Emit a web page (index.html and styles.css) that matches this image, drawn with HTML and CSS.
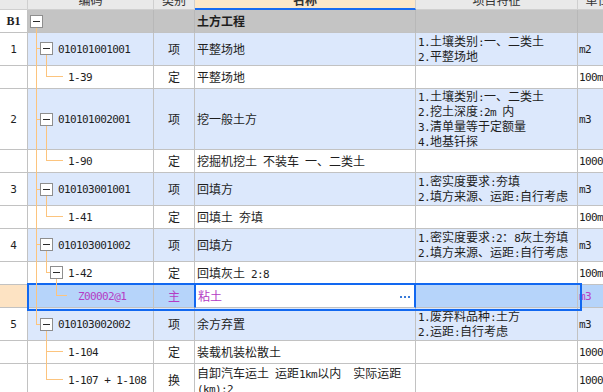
FILE: index.html
```html
<!DOCTYPE html>
<html lang="zh-CN">
<head>
<meta charset="utf-8">
<title>土方工程</title>
<link rel="stylesheet" href="styles.css">
</head>
<body>
<div class="sheet">
  <svg class="tree" width="100" height="400" viewBox="0 0 100 400" shape-rendering="crispEdges">
    <g stroke="#fcc47e" fill="none">
      <path d="M36.5 28V325M36 48.5H40M36 119.5H40M36 189.5H40M36 244.5H40M36 324.5H40"/>
      <path d="M46.5 55V77M46 76.5H63"/>
      <path d="M46.5 126V161M46 160.5H63"/>
      <path d="M46.5 196V217M46 216.5H63"/>
      <path d="M46.5 251V273M46 272.5H50"/>
      <path d="M56.5 279V296M56 295.5H67"/>
      <path d="M46.5 331V380M46 351.5H63M46 379.5H63"/>
    </g>
    <g fill="#fff" stroke="#8e8e8e">
      <rect x="30.5" y="15.5" width="12" height="12"/>
      <rect x="40.5" y="42.5" width="12" height="12"/>
      <rect x="40.5" y="113.5" width="12" height="12"/>
      <rect x="40.5" y="183.5" width="12" height="12"/>
      <rect x="40.5" y="238.5" width="12" height="12"/>
      <rect x="50.5" y="266.5" width="12" height="12"/>
      <rect x="40.5" y="318.5" width="12" height="12"/>
    </g>
    <g stroke="#2a2a2a">
      <path d="M33 21.5H40M43 48.5H50M43 119.5H50M43 189.5H50M43 244.5H50M53 272.5H60M43 324.5H50"/>
    </g>
  </svg>

  <div class="row head">
    <div class="c num"></div>
    <div class="c"><span>编码</span></div>
    <div class="c"><span>类别</span></div>
    <div class="c active"><span>名称</span></div>
    <div class="c"><span>项目特征</span></div>
    <div class="c"><span>单位</span></div>
  </div>

  <div class="row h23 group">
    <div class="c num"><span class="bnum">B1</span></div>
    <div class="c code"></div>
    <div class="c type"></div>
    <div class="c name"><span class="bold">土方工程</span></div>
    <div class="c feat"></div>
    <div class="c unit"></div>
  </div>

  <div class="row h33 item">
    <div class="c num"><span>1</span></div>
    <div class="c code l1"><span>010101001001</span></div>
    <div class="c type"><span>项</span></div>
    <div class="c name"><span>平整场地</span></div>
    <div class="c feat"><div><div><span class="a">1.</span>土壤类别<span class="a">:</span>一、二类土</div><div><span class="a">2.</span>平整场地</div></div></div>
    <div class="c unit"><span>m2</span></div>
  </div>

  <div class="row h23">
    <div class="c num"></div>
    <div class="c code l2"><span>1-39</span></div>
    <div class="c type"><span>定</span></div>
    <div class="c name"><span>平整场地</span></div>
    <div class="c feat"></div>
    <div class="c unit"><span>100m2</span></div>
  </div>

  <div class="row h61 item">
    <div class="c num"><span>2</span></div>
    <div class="c code l1"><span>010101002001</span></div>
    <div class="c type"><span>项</span></div>
    <div class="c name"><span>挖一般土方</span></div>
    <div class="c feat"><div><div><span class="a">1.</span>土壤类别<span class="a">:</span>一、二类土</div><div><span class="a">2.</span>挖土深度<span class="a">:2m </span>内</div><div><span class="a">3.</span>清单量等于定额量</div><div><span class="a">4.</span>地基钎探</div></div></div>
    <div class="c unit"><span>m3</span></div>
  </div>

  <div class="row h23">
    <div class="c num"></div>
    <div class="c code l2"><span>1-90</span></div>
    <div class="c type"><span>定</span></div>
    <div class="c name"><span>挖掘机挖土<span class="a"> </span>不装车<span class="a"> </span>一、二类土</span></div>
    <div class="c feat"></div>
    <div class="c unit"><span>1000m3</span></div>
  </div>

  <div class="row h33 item">
    <div class="c num"><span>3</span></div>
    <div class="c code l1"><span>010103001001</span></div>
    <div class="c type"><span>项</span></div>
    <div class="c name"><span>回填方</span></div>
    <div class="c feat"><div><div><span class="a">1.</span>密实度要求<span class="a">:</span>夯填</div><div><span class="a">2.</span>填方来源、运距<span class="a">:</span>自行考虑</div></div></div>
    <div class="c unit"><span>m3</span></div>
  </div>

  <div class="row h23">
    <div class="c num"></div>
    <div class="c code l2"><span>1-41</span></div>
    <div class="c type"><span>定</span></div>
    <div class="c name"><span>回填土<span class="a"> </span>夯填</span></div>
    <div class="c feat"></div>
    <div class="c unit"><span>100m3</span></div>
  </div>

  <div class="row h33 item">
    <div class="c num"><span>4</span></div>
    <div class="c code l1"><span>010103001002</span></div>
    <div class="c type"><span>项</span></div>
    <div class="c name"><span>回填方</span></div>
    <div class="c feat"><div><div><span class="a">1.</span>密实度要求<span class="a">:2</span>：<span class="a">8</span>灰土夯填</div><div><span class="a">2.</span>填方来源、运距<span class="a">:</span>自行考虑</div></div></div>
    <div class="c unit"><span>m3</span></div>
  </div>

  <div class="row h23">
    <div class="c num"></div>
    <div class="c code l2"><span>1-42</span></div>
    <div class="c type"><span>定</span></div>
    <div class="c name"><span>回填灰土<span class="a"> 2:8</span></span></div>
    <div class="c feat"></div>
    <div class="c unit"><span>100m3</span></div>
  </div>

  <div class="row h23 sel">
    <div class="c num"></div>
    <div class="c code l3"><span class="pur">Z00002@1</span></div>
    <div class="c type"><span class="pur">主</span></div>
    <div class="c name"><span class="pur">粘土</span><span class="more"></span></div>
    <div class="c feat"></div>
    <div class="c unit"><span class="pur">m3</span></div>
  </div>

  <div class="row h33 item">
    <div class="c num"><span>5</span></div>
    <div class="c code l1"><span>010103002002</span></div>
    <div class="c type"><span>项</span></div>
    <div class="c name"><span>余方弃置</span></div>
    <div class="c feat"><div><div><span class="a">1.</span>废弃料品种<span class="a">:</span>土方</div><div><span class="a">2.</span>运距<span class="a">:</span>自行考虑</div></div></div>
    <div class="c unit"><span>m3</span></div>
  </div>

  <div class="row h23">
    <div class="c num"></div>
    <div class="c code l2"><span>1-104</span></div>
    <div class="c type"><span>定</span></div>
    <div class="c name"><span>装载机装松散土</span></div>
    <div class="c feat"></div>
    <div class="c unit"><span>1000m3</span></div>
  </div>

  <div class="row h33">
    <div class="c num"></div>
    <div class="c code l2"><span>1-107 + 1-108</span></div>
    <div class="c type"><span>换</span></div>
    <div class="c name top"><div><div>自卸汽车运土<span class="a"> </span>运距<span class="a">1km</span>以内<span class="a">  </span>实际运距</div><div><span class="a">(km):2</span></div></div></div>
    <div class="c feat"></div>
    <div class="c unit"><span>1000m3</span></div>
  </div>
</div>
</body>
</html>
```

FILE: styles.css
```css
* { box-sizing: border-box; }
html, body { margin: 0; padding: 0; }
body {
  width: 603px;
  height: 392px;
  overflow: hidden;
  background: #fff;
  font: 12px "Noto Sans CJK SC", sans-serif;
  color: #1e1e1e;
}
.sheet { position: relative; width: 618px; }
.tree { position: absolute; left: 0; top: 0; z-index: 2; }

.row {
  display: grid;
  grid-template-columns: 28px 126px 41px 221px 162px 40px;
}
.h23 { height: 23px; }
.h33 { height: 33px; }
.h61 { height: 61px; }

.c {
  display: flex;
  align-items: center;
  border-right: 1px solid #c2c2c2;
  border-bottom: 1px solid #c2c2c2;
  overflow: hidden;
  white-space: nowrap;
  padding-left: 2px;
  line-height: 13.3px;
}

.head { height: 10px; }
.head .c {
  background: #e9e9e9;
  align-items: flex-end;
  justify-content: center;
  padding: 0;
  line-height: 18px;
  color: #333;
  border-color: #cfcfcf;
}
.head .active {
  background: #fde8c9;
  border-bottom: 2px solid #1a6cf0;
  line-height: 16px;
  font-weight: bold;
}

.num {
  justify-content: center;
  padding: 0;
  font: 11px "DejaVu Sans Mono", monospace;
  background: #fff;
}
.bnum { font: bold 12px "Liberation Serif", serif; }
.bold { font-weight: bold; }

.code { font: 11px "DejaVu Sans Mono", monospace; letter-spacing: -0.6px; }
.l1 { padding-left: 30px; }
.l2 { padding-left: 40px; }
.l3 { padding-left: 50px; }

.type { justify-content: center; padding: 0; }
.unit { padding-left: 1px; font: 11px "DejaVu Sans Mono", monospace; letter-spacing: -0.6px; }
.feat { white-space: nowrap; }
.name.top { align-items: flex-start; padding-top: 2px; }

.a { font: 11px "DejaVu Sans Mono", monospace; letter-spacing: -0.6px; white-space: pre; }

.group .c:not(.num) { background: #c4c4c4; border-right-color: #b8b8b8; }
.group .code, .group .type { border-right-color: #c4c4c4; }
.item .c:not(.num) { background: #dce8fc; }

.sel { position: relative; }
.sel .c { background: #b6d4fa; }
.sel .num { background: #fde3c3; }
.sel .type { border-right-color: #1268f0; }
.sel .name {
  background: #fff;
  border-left: 1px solid #1268f0;
  border-right: 2px solid #1268f0;
  justify-content: space-between;
  padding-right: 4px;
}
.sel::after {
  content: "";
  position: absolute;
  left: 27px;
  top: -2px;
  width: 551px;
  height: 24px;
  border: 2px solid #1268f0;
  pointer-events: none;
}
.pur { color: #b43cc4; }
.more {
  width: 10px;
  height: 2px;
  border-top: 2px dotted #3a7bd8;
  margin-top: 2px;
}
```
